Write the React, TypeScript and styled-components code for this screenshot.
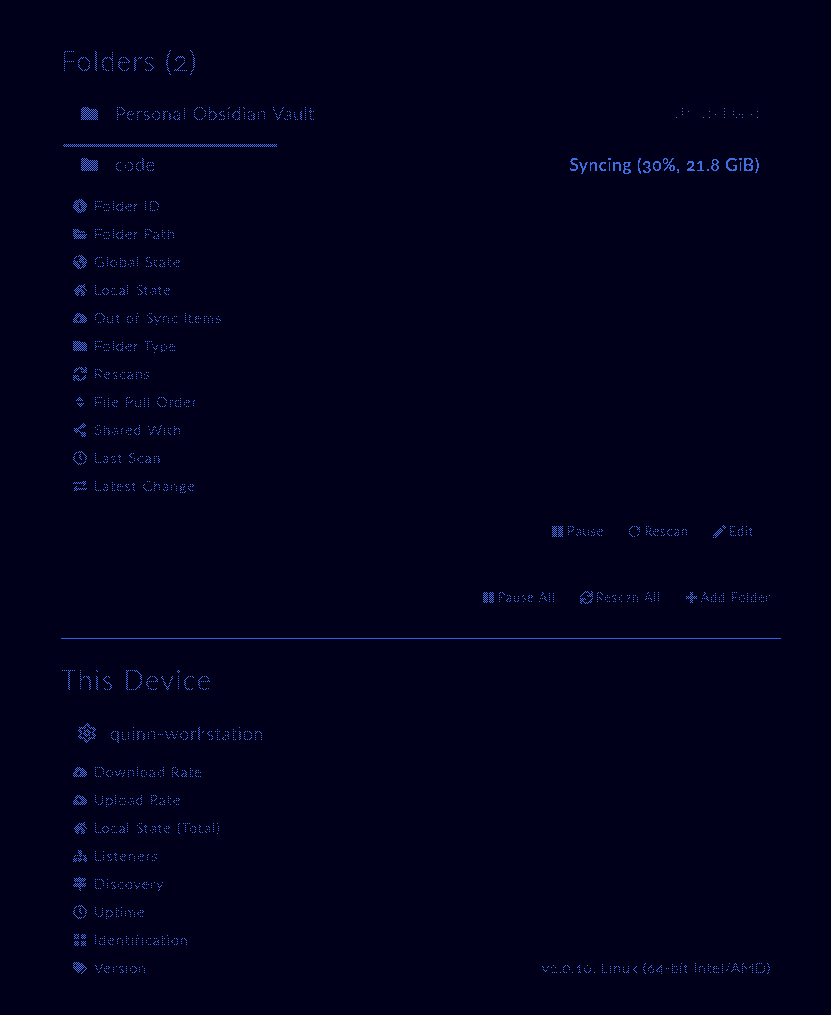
import React from "react";
import styled, { createGlobalStyle, css } from "styled-components";
import { RotateCw, Settings } from "lucide-react";
import { FaFolder, FaFolderOpen, FaShareAlt, FaHome, FaCloudDownloadAlt, FaCloudUploadAlt, FaSitemap, FaMapSigns, FaQrcode, FaTags, FaSync, FaSort, FaRegClock, FaExchangeAlt, FaPause, FaPencilAlt, FaPlus, FaGlobeAmericas, FaInfoCircle } from "react-icons/fa";

const crisp = css`filter: url(#threshold);`;
const Global = createGlobalStyle`
  html, body { margin: 0; background: #00001a; }
  body { font-family: Lato, "Liberation Sans", sans-serif; font-weight: 300; font-variant-numeric: oldstyle-nums; color: #4477ee; }
`;
const Page = styled.div`position: relative; width: 831px; height: 1015px; box-sizing: border-box; padding: 0 50px 0 61px; overflow: hidden;`;
const Dither = styled.div`
  position: absolute; inset: 0; pointer-events: none; z-index: 1;
  background-image: repeating-conic-gradient(#00001a 0 25%, transparent 0 50%);
  background-size: 2px 2px;
`;
const FilterDefs = styled.svg`display: block; width: 0; height: 0; position: absolute;`;
const Heading = styled.h2`${crisp} margin: ${p => p.$top}px 0 ${p => p.$bottom}px; font-size: 27px; font-weight: 300; line-height: 30px; letter-spacing: 1.45px;`;
const PanelRow = styled.div`display: flex; align-items: center; justify-content: space-between; height: 30px; padding: 0 21px 0 20px; font-size: 18px; line-height: 22px;`;
const PanelLabel = styled.div`${crisp} display: flex; align-items: center; gap: 17px; letter-spacing: .78px;`;
const DeviceLabel = styled(PanelLabel)`gap: 13px; margin-left: -4px; letter-spacing: .75px;`;
const Faint = styled.span`
  ${crisp}
  position: relative; z-index: 2; display: inline-block; width: 90px; text-align: right; white-space: nowrap;
  font-size: 17px; letter-spacing: .6px;
  mask-image: linear-gradient(#000 1px, transparent 1px), linear-gradient(90deg, #000 1px, transparent 1px);
  mask-size: 3px 3px;
  mask-composite: intersect;
`;
const Syncing = styled.span`${crisp} position: relative; z-index: 2; color: #3f6fe0; font-size: 17px; font-weight: 400; letter-spacing: .7px; padding-top: 2px;`;
const Bar = styled.div`width: 214px; height: 3px; background: #4477ee; margin: 16px 0 2px 2px;`;
const List = styled.div`display: flex; flex-direction: column; padding: ${p => p.$top}px 10px 0 10px;`;
const Row = styled.div`display: flex; align-items: center; justify-content: space-between; height: 28px; font-size: 14.5px; line-height: 20px;`;
const RowLabel = styled.span`${crisp} display: flex; align-items: center; gap: 6px; letter-spacing: .95px;`;
const RowValue = styled.span`${crisp} letter-spacing: .75px;`;
const IconBox = styled.span`display: inline-flex; width: 17px; justify-content: center; font-size: 14px;`;
const Actions = styled.div`display: flex; justify-content: flex-end; gap: ${p => p.$gap}px; padding: ${p => p.$pad}; font-size: 13px; line-height: 18px;`;
const Action = styled.span`${crisp} display: inline-flex; align-items: center; gap: 3px; letter-spacing: .85px;`;
const Rule = styled.hr`position: relative; z-index: 2; border: 0; height: 1px; background: #2f62e6; margin: 0; width: 720px;`;

const folderRows: [React.ReactNode, string][] = [
  [<FaInfoCircle />, "Folder ID"], [<FaFolderOpen />, "Folder Path"], [<FaGlobeAmericas />, "Global State"], [<FaHome />, "Local State"],
  [<FaCloudDownloadAlt />, "Out of Sync Items"], [<FaFolder />, "Folder Type"], [<FaSync />, "Rescans"], [<FaSort />, "File Pull Order"],
  [<FaShareAlt />, "Shared With"], [<FaRegClock />, "Last Scan"], [<FaExchangeAlt />, "Latest Change"],
];
const deviceRows: [React.ReactNode, string, string?][] = [
  [<FaCloudDownloadAlt />, "Download Rate"], [<FaCloudUploadAlt />, "Upload Rate"], [<FaHome />, "Local State (Total)"], [<FaSitemap />, "Listeners"],
  [<FaMapSigns />, "Discovery"], [<FaRegClock />, "Uptime"], [<FaQrcode />, "Identification"], [<FaTags />, "Version", "v2.0.10, Linux (64-bit Intel/AMD)"],
];

export default function App() {
  return (
    <>
      <Global />
      <FilterDefs aria-hidden="true">
        <filter id="threshold">
          <feComponentTransfer>
            <feFuncA type="discrete" tableValues="0 1 1" />
          </feComponentTransfer>
        </filter>
      </FilterDefs>
      <Page>
        <Heading $top={46} $bottom={22}>Folders (2)</Heading>
        <PanelRow><PanelLabel><FaFolder size={17} />Personal Obsidian Vault</PanelLabel><Faint>Up to Date</Faint></PanelRow>
        <Bar />
        <PanelRow><PanelLabel><FaFolder size={17} />code</PanelLabel><Syncing>Syncing (30%, 21.8 GiB)</Syncing></PanelRow>
        <List $top={13}>
          {folderRows.map(([i, t]) => <Row key={t}><RowLabel><IconBox>{i}</IconBox>{t}</RowLabel></Row>)}
        </List>
        <Actions $gap={24} $pad="22px 27px 0 0">
          <Action><FaPause />Pause</Action><Action><RotateCw size={13} strokeWidth={1.5} />Rescan</Action><Action><FaPencilAlt />Edit</Action>
        </Actions>
        <Actions $gap={24} $pad="48px 10px 32px 0">
          <Action><FaPause />Pause All</Action><Action><FaSync />Rescan All</Action><Action><FaPlus />Add Folder</Action>
        </Actions>
        <Rule />
        <Heading $top={26} $bottom={23}>This Device</Heading>
        <PanelRow><DeviceLabel><Settings size={20} strokeWidth={2.6} />quinn-workstation</DeviceLabel></PanelRow>
        <List $top={10}>
          {deviceRows.map(([i, t, v]) => <Row key={t}><RowLabel><IconBox>{i}</IconBox>{t}</RowLabel>{v && <RowValue>{v}</RowValue>}</Row>)}
        </List>
        <Dither />
      </Page>
    </>
  );
}
